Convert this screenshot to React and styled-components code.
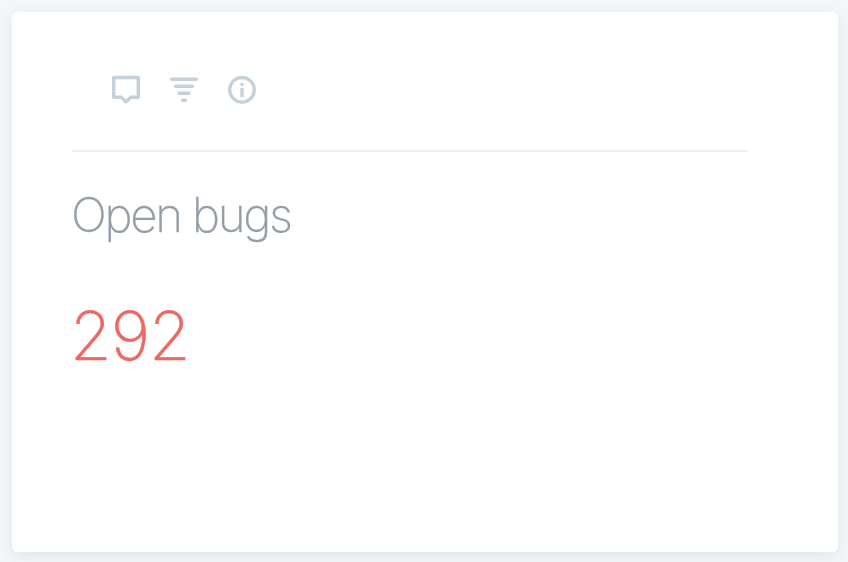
import React from 'react';
import styled, { createGlobalStyle } from 'styled-components';

const Global = createGlobalStyle`
  * { box-sizing: border-box; }
  body { margin: 0; background: #f3f7fa; }
`;
const Page = styled.main`
  height: 562px;
  padding: 12px 10px 10px 12px;
  background: #f3f7fa;
  font-family: Inter, "Liberation Sans", sans-serif;
`;
const Card = styled.section`
  height: 540px;
  padding: 0 90px 0 60px;
  background: #fff;
  border-radius: 6px;
  box-shadow: 0 4px 16px rgba(50, 60, 60, 0.09);
`;
const Toolbar = styled.header`
  display: flex;
  gap: 26px;
  height: 140px;
  padding: 62px 0 0 38px;
  border-bottom: 2px solid #edf0f2;
`;
const Icon = styled.svg`
  width: 32px;
  height: 32px;
  fill: none;
  stroke: #c4d0da;
  stroke-width: 3.4;
  stroke-linecap: ${(p) => (p.$round ? 'round' : 'butt')};
  stroke-linejoin: round;
`;
const Title = styled.h1`
  margin: 33px 0 0 -1px;
  color: #949ea7;
  font-size: 47.5px;
  font-weight: 200;
  line-height: 60px;
  letter-spacing: -2.3px;
  white-space: nowrap;
  will-change: transform;
  -webkit-text-stroke: 0.3px #949ea7;
`;
const Count = styled.div`
  margin: 51px 0 0 -2px;
  color: #ee6862;
  font-size: 67.5px;
  font-weight: 200;
  line-height: 80px;
  letter-spacing: -1px;
  will-change: transform;
  -webkit-text-stroke: 0.5px #ee6862;
`;

export default function App() {
  return (
    <Page>
      <Global />
      <Card>
        <Toolbar>
          <Icon viewBox="0 0 32 32">
            <path d="M3.7 3.5h24.6v19.8h-7.4L16 27.7l-4.9-4.4H3.7z" />
          </Icon>
          <Icon viewBox="0 0 32 32" $round>
            <path d="M3.7 5.2h24.6M7.5 12.2h17M11 19.2h10M14.5 26.2h3" />
          </Icon>
          <Icon viewBox="0 0 32 32">
            <circle cx="16" cy="15.8" r="12.3" />
            <path d="M16 14v9" />
            <circle cx="16" cy="10.5" r="1.7" fill="#c4d0da" stroke="none" />
          </Icon>
        </Toolbar>
        <Title>Open bugs</Title>
        <Count>292</Count>
      </Card>
    </Page>
  );
}
